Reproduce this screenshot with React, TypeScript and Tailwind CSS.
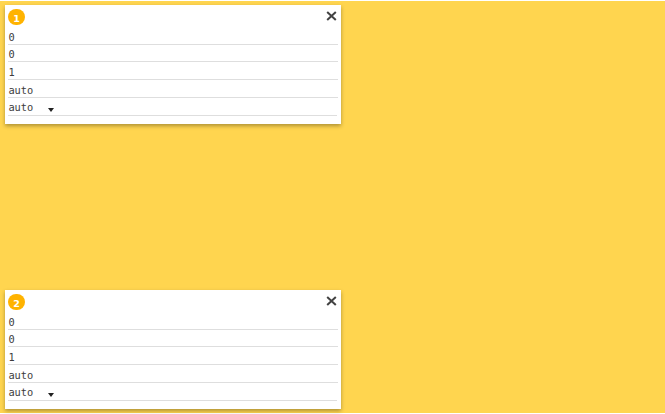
const rows = [
  { value: '0', size: 'h-[17px]' },
  { value: '0', size: 'h-[17px]' },
  { value: '1', size: 'h-[18px]' },
  { value: 'auto', size: 'h-[18px]' },
];

function FlexItemCard({ order }: { order: number }) {
  return (
    <section className="h-[119px] w-[336px] bg-white px-[3px] pt-1 shadow-[0_2px_4px_rgba(0,0,0,0.32)]">
      <header className="flex h-[19px] items-start justify-between">
        <span className="flex h-4 w-[17px] items-center justify-center rounded-full bg-[#ffb300] pt-[3px] font-['DejaVu_Sans',sans-serif] text-[9.5px] leading-none font-bold text-white">
          {order}
        </span>
        <button aria-label="Remove item" className="mt-[2px] mr-px flex text-[#424242]">
          <svg width="11" height="10" viewBox="0 0 11 10" fill="none" stroke="currentColor" strokeWidth="2">
            <path d="M1.2 1 9.8 9M9.8 1 1.2 9" />
          </svg>
        </button>
      </header>
      {rows.map((row, index) => (
        <div key={index} className={`${row.size} flex items-end border-b border-[#dedede] pb-px pl-[0.4px] text-[10.3px] leading-[12px]`}>
          {row.value}
        </div>
      ))}
      <div className="mr-px flex h-[18px] items-end border-b border-[#dedede] pb-[2px] pl-[0.4px] text-[10.3px] leading-[12px]">
        <span className="w-[39.6px]">auto</span>
        <svg className="mb-px" width="6" height="4" viewBox="0 0 6 4" fill="#212121">
          <path d="M0 0h6L3 4z" />
        </svg>
      </div>
    </section>
  );
}

export default function App() {
  return (
    <main className="h-[414px] w-[665px] bg-white py-px font-['DejaVu_Sans_Mono',monospace] text-[#3c3c3c]">
      <div className="flex h-full flex-col justify-between bg-[#ffd54f] pt-1 pr-1 pb-1 pl-[5px]">
        <FlexItemCard order={1} />
        <FlexItemCard order={2} />
      </div>
    </main>
  );
}
